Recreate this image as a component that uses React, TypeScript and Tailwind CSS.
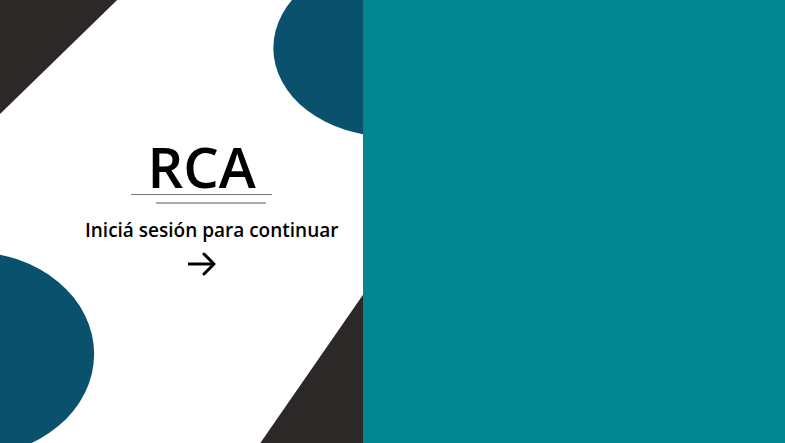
function Shapes() {
  return (
    <svg
      className="absolute inset-0 h-full w-full"
      viewBox="0 0 363 443"
      preserveAspectRatio="none"
      aria-hidden="true"
    >
      <path d="M0 0H117L0 114Z" fill="#2c2827" />
      <path d="M363 294V443H260Z" fill="#2c2827" />
      <ellipse cx="389" cy="48" rx="116" ry="88.5" fill="#0a516d" />
      <ellipse cx="-28" cy="354" rx="122" ry="102" fill="#0a516d" />
    </svg>
  );
}

export default function App() {
  return (
    <main className="flex min-h-screen bg-[#02868f] font-['Open_Sans','Noto_Sans',sans-serif] text-black">
      <section className="relative flex w-[46.3%] flex-col justify-center overflow-hidden bg-white">
        <Shapes />
        <div className="relative flex flex-col items-center pb-[30px] pl-10">
          <h1 className="text-[56px] leading-[56px] font-semibold">RCA</h1>
          <div className="flex flex-col items-end gap-[7px]">
            <div className="h-px w-[141px] bg-[#777]" />
            <div className="mr-[6px] h-0.5 w-[110px] bg-[#aaa]" />
          </div>
          <p className="mt-3 pl-5 text-[19px] leading-7 font-semibold whitespace-nowrap">
            Iniciá sesión para continuar
          </p>
          <a href="#login" aria-label="Iniciar sesión" className="mt-2 block">
            <svg
              className="h-6 w-7"
              viewBox="0 0 28 24"
              fill="none"
              stroke="currentColor"
              strokeWidth="3"
              aria-hidden="true"
            >
              <path d="M0 12H26" />
              <path d="M16 2L26 12L16 22" strokeLinecap="round" strokeLinejoin="round" />
            </svg>
          </a>
        </div>
      </section>
      <section className="flex-1" />
    </main>
  );
}
